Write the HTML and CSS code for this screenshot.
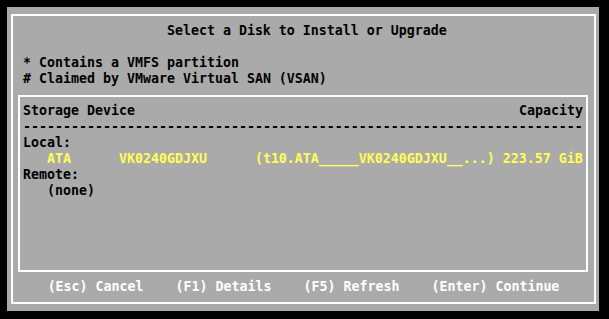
FILE: index.html
```html
<!DOCTYPE html>
<html lang="en">
<head>
<meta charset="UTF-8">
<meta name="viewport" content="width=device-width, initial-scale=1.0">
<title>Select a Disk to Install or Upgrade</title>
<link rel="stylesheet" href="styles.css">
</head>
<body>

<div class="panel">
  <div class="frame">
    <div class="line title">Select a Disk to Install or Upgrade</div>

    <div class="legend">
      <div class="line">* Contains a VMFS partition</div>
      <div class="line"># Claimed by VMware Virtual SAN (VSAN)</div>
    </div>

    <div class="devices">
      <div class="row head">
        <span>Storage Device</span>
        <span>Capacity</span>
      </div>
      <div class="row rule">----------------------------------------------------------------------</div>
      <div class="row">Local:</div>
      <div class="row disk">   ATA      VK0240GDJXU      (t10.ATA_____VK0240GDJXU__...) 223.57 GiB</div>
      <div class="row">Remote:</div>
      <div class="row">   (none)</div>
    </div>

    <div class="keys">(Esc) Cancel    (F1) Details    (F5) Refresh    (Enter) Continue</div>
  </div>
</div>

</body>
</html>
```

FILE: styles.css
```css
* {
  padding: 0;
  margin: 0;
  box-sizing: border-box;
}

body {
  background-color: #000;
  font-family: "DejaVu Sans Mono", "Liberation Mono", monospace;
  font-size: 13.29px;
  font-weight: bold;
  line-height: 16px;
  color: #000;
}

.panel {
  margin: 7px 10px 8px 7px;
  height: 304px;
  padding: 7px 3px 7px 4px;
  background-color: #aaaaaa;
}

.frame {
  height: 290px;
  border: 2px solid #fff;
  padding-top: 7px;
}

.line {
  white-space: pre;
  padding-left: 10px;
}

.title {
  padding-left: calc(10px + 18ch);
}

.legend {
  margin-top: 16px;
}

.devices {
  margin: 8px 6px 0 5px;
  height: 177px;
  border: 2px solid #fff;
  padding: 6px 3px 0 3px;
}

.row {
  white-space: pre;
  height: 16px;
}

.head {
  display: flex;
  justify-content: space-between;
}

.rule {
  overflow: hidden;
}

.disk {
  color: #ffff55;
}

.keys {
  margin-top: 7px;
  white-space: pre;
  text-align: center;
  color: #fff;
}
```
